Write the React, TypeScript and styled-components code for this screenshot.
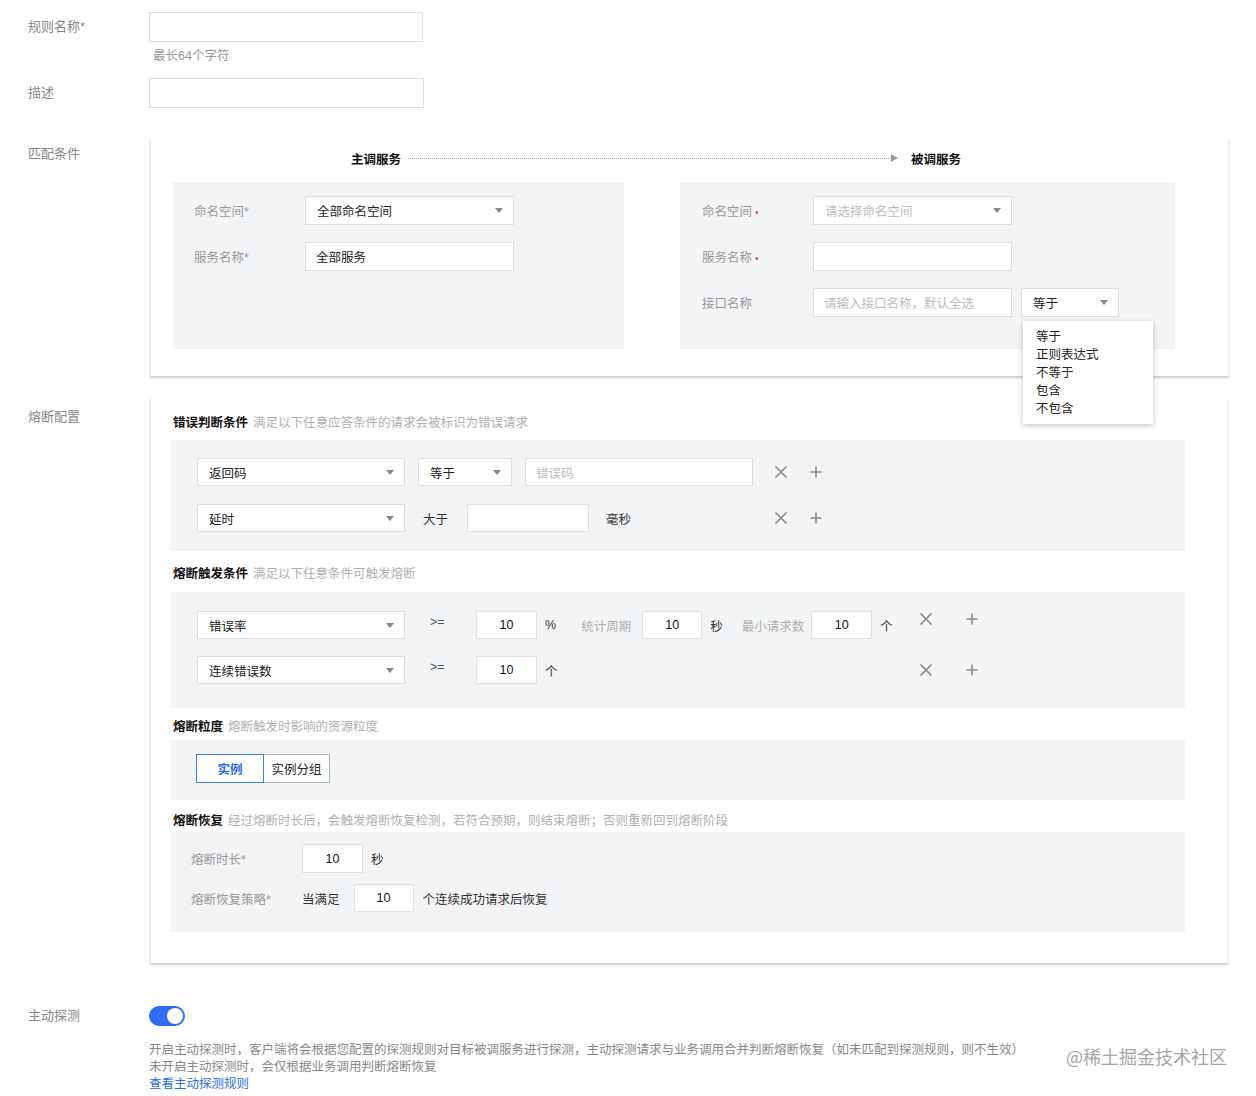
import styled, { createGlobalStyle } from 'styled-components';

const GlobalStyle = createGlobalStyle`
    html, body {
        margin: 0;
        padding: 0;
        background: #ffffff;
    }
    body {
        font-family: "Liberation Sans", "Noto Sans CJK SC", sans-serif;
        font-size: 12.5px;
        color: #222;
    }
    * { box-sizing: border-box; }
`;

const Page = styled.div`
    position: relative;
    width: 1256px;
    height: 1096px;
    padding: 12px 0 0 28px;
    overflow: hidden;
`;

const FormRow = styled.div<{ $mt?: number }>`
    display: grid;
    grid-template-columns: 121px auto;
    align-items: start;
    margin-top: ${p => p.$mt ?? 0}px;
`;

const RowLabel = styled.div<{ $pt?: number; $lh?: number }>`
    font-size: 13px;
    color: #888;
    line-height: ${p => p.$lh ?? 30}px;
    padding-top: ${p => p.$pt ?? 0}px;
`;

const TextInput = styled.div<{ $w: number; $h?: number }>`
    width: ${p => p.$w}px;
    height: ${p => p.$h ?? 30}px;
    background: #fff;
    border: 1px solid #dedede;
    display: flex;
    align-items: center;
    padding: 0 10px;
    color: #222;
`;

const Placeholder = styled.span`
    color: #bdbdbd;
`;

const Hint = styled.div`
    margin-top: 5px;
    padding-left: 4px;
    line-height: 18px;
    color: #999;
    font-size: 12.5px;
`;

const SelectBox = styled.div<{ $w: number; $h: number }>`
    position: relative;
    width: ${p => p.$w}px;
    height: ${p => p.$h}px;
    background: #fff;
    border: 1px solid #dedede;
    display: flex;
    align-items: center;
    justify-content: space-between;
    padding: 0 10px 0 11px;
    color: #222;
`;

const Caret = styled.span`
    width: 0;
    height: 0;
    border-left: 4px solid transparent;
    border-right: 4px solid transparent;
    border-top: 5px solid #888;
`;

const Card = styled.div<{ $w: number }>`
    width: ${p => p.$w}px;
    background: #fff;
    border-left: 1px solid #e9e9e9;
    border-right: 1px solid #f0f0f0;
    box-shadow: 0 2px 2px rgba(0, 0, 0, 0.2);
`;

const MatchCard = styled(Card)`
    padding: 10px 53px 27px 22px;
    margin-left: 1px;
`;

const FlowHeader = styled.div`
    display: flex;
    align-items: center;
    height: 20px;
    padding-left: 178px;
    font-weight: bold;
    color: #111;
`;

const DottedLine = styled.span`
    width: 483px;
    margin-left: 7px;
    border-top: 1px dotted #aaa;
`;

const Arrow = styled.span`
    width: 0;
    height: 0;
    border-top: 4px solid transparent;
    border-bottom: 4px solid transparent;
    border-left: 7px solid #999;
    margin-right: 13px;
`;

const ServicePanels = styled.div`
    display: flex;
    gap: 56px;
    margin-top: 14px;
`;

const ServicePanel = styled.div<{ $w: number; $pl: number }>`
    width: ${p => p.$w}px;
    height: 167px;
    background: #f3f4f6;
    padding: 14px 0 0 ${p => p.$pl}px;
    display: flex;
    flex-direction: column;
    gap: 17px;
`;

const ServiceRow = styled.div`
    display: flex;
    align-items: center;
`;

const ServiceLabel = styled.div`
    width: 111px;
    color: #999;
    font-size: 12.5px;
`;

const RedDot = styled.span`
    color: #e5414e;
    margin-left: 3px;
    font-size: 10px;
`;

const MenuAnchor = styled.div`
    position: relative;
    margin-left: 9px;
`;

const Menu = styled.div`
    position: absolute;
    top: calc(100% + 4px);
    left: 2px;
    width: 130px;
    padding: 7px 0 6px;
    background: #fff;
    box-shadow: 0 2px 6px rgba(0, 0, 0, 0.22);
    z-index: 5;
`;

const MenuItem = styled.div`
    line-height: 18px;
    padding-left: 13px;
    color: #222;
`;

const BreakerCard = styled(Card)`
    padding: 17px 42px 31px 20px;
    margin-left: 1px;
`;

const SectionTitle = styled.div<{ $mt?: number }>`
    line-height: 16px;
    height: 16px;
    padding-left: 2px;
    margin-top: ${p => p.$mt ?? 0}px;
    font-weight: bold;
    color: #111;
`;

const SectionDesc = styled.span`
    font-weight: normal;
    color: #b0b0b0;
    margin-left: 5px;
`;

const Panel = styled.div<{ $mt: number; $pad: string; $gap?: number }>`
    margin-top: ${p => p.$mt}px;
    padding: ${p => p.$pad};
    background: #f3f4f6;
    display: flex;
    flex-direction: column;
    gap: ${p => p.$gap ?? 0}px;
`;

const ErrorRow = styled.div`
    display: grid;
    grid-template-columns: 208px 335px auto;
    column-gap: 13px;
    align-items: center;
    height: 28px;
`;

const Inline = styled.div`
    display: flex;
    align-items: center;
`;

const PlainText = styled.span<{ $ml?: number; $gray?: boolean }>`
    margin-left: ${p => p.$ml ?? 0}px;
    color: ${p => (p.$gray ? '#b0b0b0' : '#333')};
    white-space: nowrap;
`;

const NumInput = styled.div<{ $ml?: number; $w?: number; $h?: number }>`
    margin-left: ${p => p.$ml ?? 0}px;
    width: ${p => p.$w ?? 61}px;
    height: ${p => p.$h ?? 28}px;
    background: #fff;
    border: 1px solid #e2e2e2;
    display: flex;
    align-items: center;
    justify-content: center;
    color: #111;
`;

const IconGroup = styled.div<{ $gap: number; $ml?: number; $start?: boolean }>`
    display: flex;
    align-items: center;
    gap: ${p => p.$gap}px;
    margin-left: ${p => p.$ml ?? 0}px;
    height: 16px;
    align-self: ${p => (p.$start ? 'start' : 'center')};
`;

const TriggerRow = styled.div`
    display: grid;
    grid-template-columns: 208px 71px 443px auto;
    align-items: center;
    height: 28px;
`;

const Operator = styled.span`
    align-self: start;
    line-height: 22px;
    padding-left: 25px;
    color: #555;
`;

const Segmented = styled.div`
    display: flex;
`;

const Segment = styled.div<{ $active?: boolean; $w: number }>`
    width: ${p => p.$w}px;
    height: 29px;
    display: flex;
    align-items: center;
    justify-content: center;
    background: #fff;
    border: 1px solid ${p => (p.$active ? '#3b7ae8' : '#b5b5b5')};
    color: ${p => (p.$active ? '#2d6ce8' : '#222')};
    font-weight: ${p => (p.$active ? 'bold' : 'normal')};
    margin-left: ${p => (p.$active ? 0 : -1)}px;
    position: relative;
    z-index: ${p => (p.$active ? 1 : 0)};
`;

const RecoveryRow = styled.div`
    display: grid;
    grid-template-columns: 111px auto;
    align-items: center;
`;

const Toggle = styled.div<{ $on: boolean }>`
    width: 36px;
    height: 20px;
    border-radius: 10px;
    background: ${p => (p.$on ? '#2f6ef2' : '#ccc')};
    position: relative;
    &::after {
        content: '';
        position: absolute;
        top: 2px;
        left: ${p => (p.$on ? 18 : 2)}px;
        width: 16px;
        height: 16px;
        border-radius: 50%;
        background: #fff;
    }
`;

const ProbeInfo = styled.div`
    margin-top: 16px;
    margin-left: 121px;
    font-size: 12.5px;
    line-height: 17px;
    color: #888;
`;

const Link = styled.a`
    color: #2b6de3;
    text-decoration: none;
    display: block;
`;

const Watermark = styled.div`
    position: absolute;
    right: 29px;
    top: 1044px;
    font-size: 18px;
    line-height: 24px;
    color: #a6a6a6;
    font-family: "Noto Sans CJK SC", sans-serif;
`;

const CloseIcon = ({ size = 14 }: { size?: number }) => (
    <svg width={size} height={size} viewBox="0 0 14 14">
        <path d="M1.5 1.5 L12.5 12.5 M12.5 1.5 L1.5 12.5" stroke="#8a8a8a" strokeWidth="1.7" fill="none" />
    </svg>
);

const PlusIcon = () => (
    <svg width="12" height="12" viewBox="0 0 12 12">
        <path d="M6 0.5 V11.5 M0.5 6 H11.5" stroke="#8a8a8a" strokeWidth="1.6" fill="none" />
    </svg>
);

const Select = ({ w, h = 29, value, placeholder }: { w: number; h?: number; value?: string; placeholder?: string }) => (
    <SelectBox $w={w} $h={h}>
        {value ? <span>{value}</span> : <Placeholder>{placeholder}</Placeholder>}
        <Caret />
    </SelectBox>
);

const matchOps = ['等于', '正则表达式', '不等于', '包含', '不包含'];

const App = () => {
    return (
        <Page>
            <GlobalStyle />

            <FormRow>
                <RowLabel>规则名称*</RowLabel>
                <div>
                    <TextInput $w={274} />
                    <Hint>最长64个字符</Hint>
                </div>
            </FormRow>

            <FormRow $mt={13}>
                <RowLabel>描述</RowLabel>
                <TextInput $w={275} />
            </FormRow>

            <FormRow $mt={30}>
                <RowLabel $pt={8} $lh={16}>匹配条件</RowLabel>
                <MatchCard $w={1079}>
                    <FlowHeader>
                        <span>主调服务</span>
                        <DottedLine />
                        <Arrow />
                        <span>被调服务</span>
                    </FlowHeader>
                    <ServicePanels>
                        <ServicePanel $w={452} $pl={21}>
                            <ServiceRow>
                                <ServiceLabel>命名空间*</ServiceLabel>
                                <Select w={209} value="全部命名空间" />
                            </ServiceRow>
                            <ServiceRow>
                                <ServiceLabel>服务名称*</ServiceLabel>
                                <TextInput $w={209} $h={29}>全部服务</TextInput>
                            </ServiceRow>
                        </ServicePanel>
                        <ServicePanel $w={496} $pl={22}>
                            <ServiceRow>
                                <ServiceLabel>命名空间<RedDot>•</RedDot></ServiceLabel>
                                <Select w={199} placeholder="请选择命名空间" />
                            </ServiceRow>
                            <ServiceRow>
                                <ServiceLabel>服务名称<RedDot>•</RedDot></ServiceLabel>
                                <TextInput $w={199} $h={29} />
                            </ServiceRow>
                            <ServiceRow>
                                <ServiceLabel>接口名称</ServiceLabel>
                                <TextInput $w={199} $h={29}>
                                    <Placeholder>请输入接口名称，默认全选</Placeholder>
                                </TextInput>
                                <MenuAnchor>
                                    <Select w={98} value="等于" />
                                    <Menu>
                                        {matchOps.map(op => (
                                            <MenuItem key={op}>{op}</MenuItem>
                                        ))}
                                    </Menu>
                                </MenuAnchor>
                            </ServiceRow>
                        </ServicePanel>
                    </ServicePanels>
                </MatchCard>
            </FormRow>

            <FormRow $mt={22}>
                <RowLabel $pt={11} $lh={16}>熔断配置</RowLabel>
                <BreakerCard $w={1078}>
                    <SectionTitle>
                        错误判断条件<SectionDesc>满足以下任意应答条件的请求会被标识为错误请求</SectionDesc>
                    </SectionTitle>
                    <Panel $mt={9} $pad="18px 0 19px 26px" $gap={18}>
                        <ErrorRow>
                            <Select w={208} h={28} value="返回码" />
                            <Inline>
                                <Select w={94} h={28} value="等于" />
                                <TextInput $w={228} $h={28} style={{ marginLeft: 13 }}>
                                    <Placeholder>错误码</Placeholder>
                                </TextInput>
                            </Inline>
                            <IconGroup $gap={22} $ml={8}>
                                <CloseIcon />
                                <PlusIcon />
                            </IconGroup>
                        </ErrorRow>
                        <ErrorRow>
                            <Select w={208} h={28} value="延时" />
                            <Inline>
                                <PlainText $ml={5}>大于</PlainText>
                                <NumInput $ml={19} $w={122} />
                                <PlainText $ml={17}>毫秒</PlainText>
                            </Inline>
                            <IconGroup $gap={22} $ml={8}>
                                <CloseIcon />
                                <PlusIcon />
                            </IconGroup>
                        </ErrorRow>
                    </Panel>

                    <SectionTitle $mt={15}>
                        熔断触发条件<SectionDesc>满足以下任意条件可触发熔断</SectionDesc>
                    </SectionTitle>
                    <Panel $mt={10} $pad="19px 0 24px 26px" $gap={17}>
                        <TriggerRow>
                            <Select w={208} h={28} value="错误率" />
                            <Operator>&gt;=</Operator>
                            <Inline>
                                <NumInput>10</NumInput>
                                <PlainText $ml={8}>%</PlainText>
                                <PlainText $ml={25} $gray>统计周期</PlainText>
                                <NumInput $ml={11} $w={60}>10</NumInput>
                                <PlainText $ml={8}>秒</PlainText>
                                <PlainText $ml={19} $gray>最小请求数</PlainText>
                                <NumInput $ml={7}>10</NumInput>
                                <PlainText $ml={8}>个</PlainText>
                            </Inline>
                            <IconGroup $gap={33} $start>
                                <CloseIcon />
                                <PlusIcon />
                            </IconGroup>
                        </TriggerRow>
                        <TriggerRow>
                            <Select w={208} h={28} value="连续错误数" />
                            <Operator>&gt;=</Operator>
                            <Inline>
                                <NumInput>10</NumInput>
                                <PlainText $ml={8}>个</PlainText>
                            </Inline>
                            <IconGroup $gap={33}>
                                <CloseIcon />
                                <PlusIcon />
                            </IconGroup>
                        </TriggerRow>
                    </Panel>

                    <SectionTitle $mt={11}>
                        熔断粒度<SectionDesc>熔断触发时影响的资源粒度</SectionDesc>
                    </SectionTitle>
                    <Panel $mt={5} $pad="14px 0 17px 25px">
                        <Segmented>
                            <Segment $active $w={68}>实例</Segment>
                            <Segment $w={67}>实例分组</Segment>
                        </Segmented>
                    </Panel>

                    <SectionTitle $mt={13}>
                        熔断恢复<SectionDesc>经过熔断时长后，会触发熔断恢复检测，若符合预期，则结束熔断；否则重新回到熔断阶段</SectionDesc>
                    </SectionTitle>
                    <Panel $mt={3} $pad="12px 0 20px 20px" $gap={11}>
                        <RecoveryRow>
                            <ServiceLabel>熔断时长*</ServiceLabel>
                            <Inline>
                                <NumInput $h={29}>10</NumInput>
                                <PlainText $ml={8}>秒</PlainText>
                            </Inline>
                        </RecoveryRow>
                        <RecoveryRow>
                            <ServiceLabel>熔断恢复策略*</ServiceLabel>
                            <Inline>
                                <PlainText>当满足</PlainText>
                                <NumInput $ml={14} $w={60}>10</NumInput>
                                <PlainText $ml={9}>个连续成功请求后恢复</PlainText>
                            </Inline>
                        </RecoveryRow>
                    </Panel>
                </BreakerCard>
            </FormRow>

            <FormRow $mt={43}>
                <RowLabel $lh={20}>主动探测</RowLabel>
                <Toggle $on />
            </FormRow>
            <ProbeInfo>
                <div>开启主动探测时，客户端将会根据您配置的探测规则对目标被调服务进行探测，主动探测请求与业务调用合并判断熔断恢复（如未匹配到探测规则，则不生效）</div>
                <div>未开启主动探测时，会仅根据业务调用判断熔断恢复</div>
                <Link href="#">查看主动探测规则</Link>
            </ProbeInfo>

            <Watermark>@稀土掘金技术社区</Watermark>
        </Page>
    );
};

export default App;
